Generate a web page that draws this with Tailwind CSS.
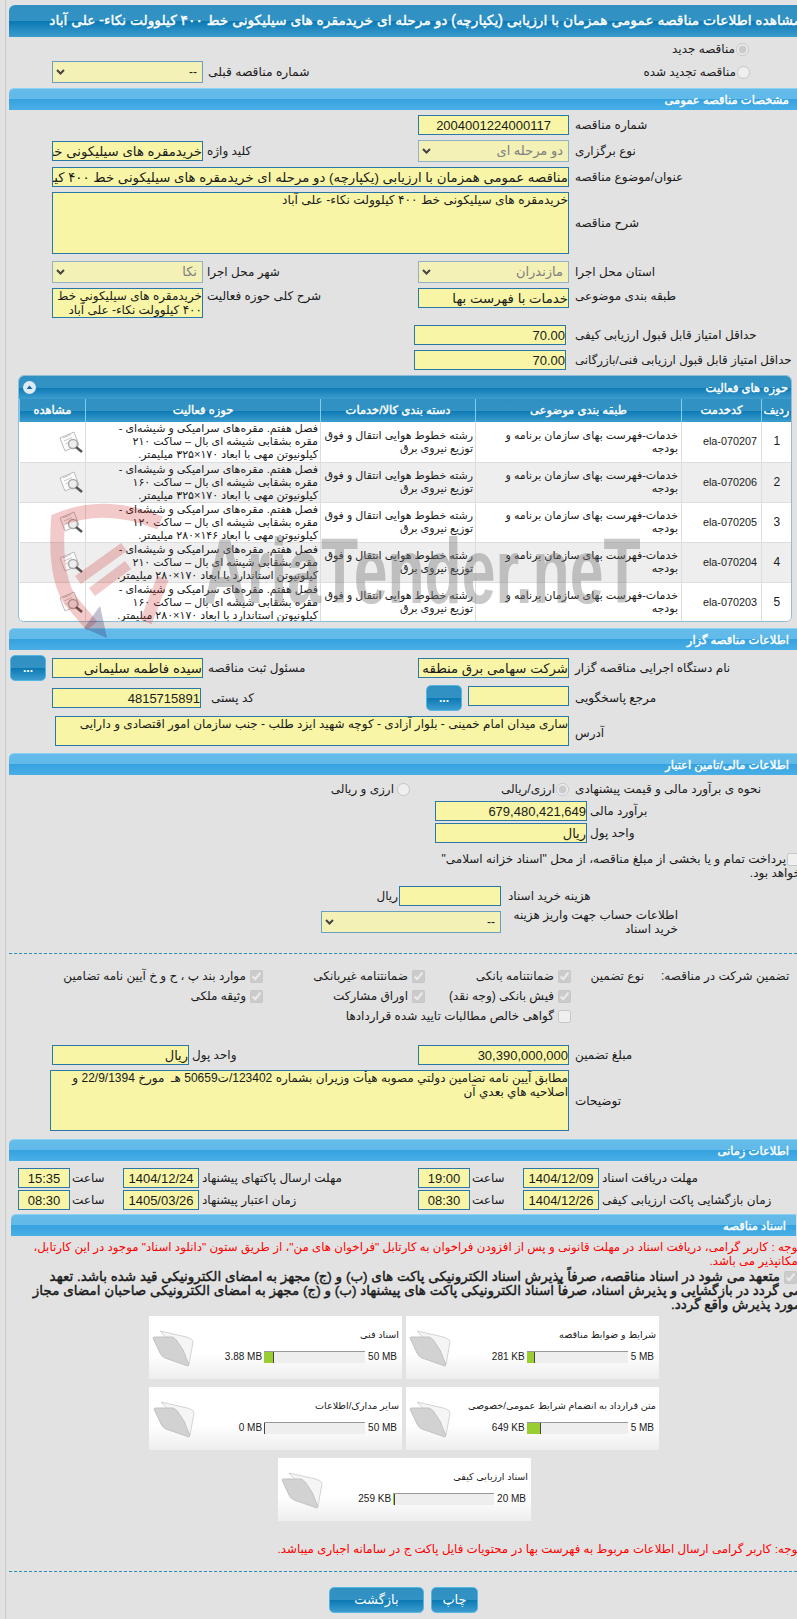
<!doctype html>
<html lang="fa">
<head>
<meta charset="utf-8">
<script src="https://cdn.jsdelivr.net/npm/@tailwindcss/browser@4"></script>
</head>
<body>
<div class="relative w-[797px] h-[1619px] overflow-hidden bg-[#e2e2e2] text-[12px] leading-[14px] whitespace-nowrap text-[#1a1a1a] [font-family:'Liberation_Sans','DejaVu_Sans',sans-serif]">
<div class="ml-[5px] w-[792px] h-[1619px] border-l border-[#cdcdcd] pl-[3px] pt-[5px]">

<div class="h-[32px] w-[788px] rounded-tl-[6px] bg-[linear-gradient(#2f90c1_0,#3192c3_50%,#0a78b3_50%,#3d9dce_100%)] flex justify-end items-center overflow-hidden">
<div dir="rtl" class="whitespace-nowrap text-white text-[13.8px] mr-[-4px] [-webkit-text-stroke:0.4px_#fff]">مشاهده اطلاعات مناقصه عمومی همزمان با ارزیابی (یکپارچه) دو مرحله ای خریدمقره های سیلیکونی خط ۴۰۰ کیلوولت نکاء- علی آباد</div>
</div>

<div class="h-[20px] mt-[2px] flex items-center"><div class="w-[575px]"></div><div class="w-[151px] flex justify-end items-center"><span dir="rtl">مناقصه جدید</span></div><input type="radio" checked disabled class="ml-[1px] w-[13px] h-[13px]"></div>
<div class="h-[22px] mt-[2px] flex items-center pl-[43px]">
<div class="relative w-[151px] h-[22px]"><select dir="rtl" class="appearance-none w-full h-full border border-[#6b9fc0] bg-[#f3f1b5] text-[12px] pr-[5px]"><option>--</option></select><svg class="absolute left-[4px] top-[8px]" width="9" height="6" viewBox="0 0 9 6"><path d="M1 1l3.5 3.5L8 1" stroke="#444" stroke-width="2" fill="none"/></svg></div>
<span dir="rtl" class="ml-[5px] text-[12.3px]">شماره مناقصه قبلی</span>
<div class="ml-auto flex items-center mr-[47px]"><span dir="rtl">مناقصه تجدید شده</span><input type="radio" disabled class="ml-[1px] w-[13px] h-[13px]"></div>
</div>

<div class="mt-[5px] h-[22px] w-[788px] rounded-tl-[5px] border-t border-[#8ad2f2] bg-[linear-gradient(#65bcea_0,#60b9e9_50%,#36a2e0_50%,#4aafe6_100%)] flex justify-end items-center pr-[8px]"><span dir="rtl" class="text-white text-[11.5px] [-webkit-text-stroke:0.4px_#fff]">مشخصات مناقصه عمومی</span></div>

<div class="mt-[5px] h-[20px] flex items-center pl-[409px]">
<input readonly value="2004001224000117" class="w-[151px] h-[20px] border border-[#2a78a8] bg-[#f8f6a6] text-center text-[13px]">
<span dir="rtl" class="ml-[6px]">شماره مناقصه</span>
</div>
<div class="mt-[5px] h-[22px] flex items-center pl-[43px]">
<input readonly dir="rtl" value="خریدمقره های سیلیکونی خط ۴۰۰ کیلوولت نکاء- علی آباد" class="w-[151px] h-[20px] border border-[#2a78a8] bg-[#f8f6a6] text-[13.3px]">
<span dir="rtl" class="ml-[4px] w-[211px] text-left">کلید واژه</span>
<div class="relative w-[151px] h-[22px]"><select dir="rtl" class="appearance-none w-full h-full border border-[#8fb2c6] bg-[#f3f1b5] text-[13px] text-[#808080] pr-[5px]"><option>دو مرحله ای</option></select><svg class="absolute left-[4px] top-[8px]" width="9" height="6" viewBox="0 0 9 6"><path d="M1 1l3.5 3.5L8 1" stroke="#444" stroke-width="2" fill="none"/></svg></div>
<span dir="rtl" class="ml-[6px]">نوع برگزاری</span>
</div>
<div class="mt-[5px] h-[20px] flex items-center pl-[43px]">
<input readonly dir="rtl" value="مناقصه عمومی همزمان با ارزیابی (یکپارچه) دو مرحله ای خریدمقره های سیلیکونی خط ۴۰۰ کیلوولت نکاء- علی آباد" class="w-[517px] h-[20px] border border-[#2a78a8] bg-[#f8f6a6] text-[13.3px]">
<span dir="rtl" class="ml-[6px]">عنوان/موضوع مناقصه</span>
</div>
<div class="mt-[5px] h-[62px] flex items-center pl-[43px]">
<textarea readonly dir="rtl" class="w-[517px] h-[62px] border border-[#2a78a8] bg-[#f8f6a6] text-[12.2px] leading-[14px] resize-none overflow-hidden">خریدمقره های سیلیکونی خط ۴۰۰ کیلوولت نکاء- علی آباد</textarea>
<span dir="rtl" class="ml-[6px]">شرح مناقصه</span>
</div>
<div class="mt-[7px] h-[22px] flex items-center pl-[43px]">
<div class="relative w-[151px] h-[22px]"><select dir="rtl" class="appearance-none w-full h-full border border-[#8fb2c6] bg-[#f3f1b5] text-[13px] text-[#808080] pr-[5px]"><option>نکا</option></select><svg class="absolute left-[4px] top-[8px]" width="9" height="6" viewBox="0 0 9 6"><path d="M1 1l3.5 3.5L8 1" stroke="#444" stroke-width="2" fill="none"/></svg></div>
<span dir="rtl" class="ml-[4px] w-[211px] text-left">شهر محل اجرا</span>
<div class="relative w-[151px] h-[22px]"><select dir="rtl" class="appearance-none w-full h-full border border-[#8fb2c6] bg-[#f3f1b5] text-[13px] text-[#808080] pr-[5px]"><option>مازندران</option></select><svg class="absolute left-[4px] top-[8px]" width="9" height="6" viewBox="0 0 9 6"><path d="M1 1l3.5 3.5L8 1" stroke="#444" stroke-width="2" fill="none"/></svg></div>
<span dir="rtl" class="ml-[6px]">استان محل اجرا</span>
</div>
<div class="mt-[5px] h-[30px] flex items-start pl-[43px]">
<textarea readonly dir="rtl" class="w-[151px] h-[30px] border border-[#2a78a8] bg-[#f8f6a6] text-[12px] leading-[14px] resize-none overflow-hidden">خریدمقره های سیلیکوني خط ۴۰۰ کیلوولت نکاء- علی آباد</textarea>
<span dir="rtl" class="ml-[4px] w-[211px] mt-[1px] text-left">شرح کلی حوزه فعالیت</span>
<input readonly dir="rtl" value="خدمات با فهرست بها" class="w-[151px] h-[20px] border border-[#2a78a8] bg-[#f8f6a6] text-[13.3px]">
<span dir="rtl" class="ml-[6px] mt-[1px]">طبقه بندی موضوعی</span>
</div>
<div class="mt-[7px] h-[20px] flex items-center pl-[405px]">
<input readonly dir="rtl" value="70.00" class="w-[152px] h-[20px] border border-[#2a78a8] bg-[#f8f6a6] text-[13px]">
<span dir="rtl" class="ml-[9px]">حداقل امتیاز قابل قبول ارزیابی کیفی</span>
</div>
<div class="mt-[5px] h-[20px] flex items-center pl-[405px]">
<input readonly dir="rtl" value="70.00" class="w-[152px] h-[20px] border border-[#2a78a8] bg-[#f8f6a6] text-[13px]">
<span dir="rtl" class="ml-[9px] text-[11.8px]">حداقل امتیاز قابل قبول ارزیابی فنی/بازرگانی</span>
</div>

<div class="mt-[5px] ml-[9px] w-[774px] h-[247px] rounded-[6px] border border-[#8fbcd6] overflow-hidden bg-white">
<div class="h-[23px] bg-[linear-gradient(#2f90c1_0,#3192c3_50%,#0a78b3_50%,#3d9dce_100%)] flex items-center justify-between pl-[4px] pr-[3px]">
<svg width="13" height="13" viewBox="0 0 13 13"><circle cx="6.5" cy="6.5" r="6.5" fill="#dfeaf2"/><path d="M3.5 8 6.5 4.5 9.5 8z" fill="#0d6ea8"/></svg>
<span dir="rtl" class="text-white text-[11.5px] [-webkit-text-stroke:0.4px_#fff]">حوزه های فعالیت</span>
</div>
<table dir="rtl" class="table-fixed w-[772px] border-collapse text-[11px] leading-[13px]">
<colgroup><col class="w-[30px]"><col class="w-[80px]"><col class="w-[206px]"><col class="w-[155px]"><col class="w-[235px]"><col class="w-[66px]"></colgroup>
<thead><tr class="h-[23px] text-white text-[11.5px] bg-[linear-gradient(#2f90c1_0,#3192c3_50%,#0a78b3_50%,#3d9dce_100%)] [-webkit-text-stroke:0.4px_#fff]">
<th class="border-x border-[#7fcdf0] font-normal">ردیف</th><th class="border-x border-[#7fcdf0] font-normal">کدخدمت</th><th class="border-x border-[#7fcdf0] font-normal">طبقه بندی موضوعی</th><th class="border-x border-[#7fcdf0] font-normal">دسته بندی کالا/خدمات</th><th class="border-x border-[#7fcdf0] font-normal">حوزه فعالیت</th><th class="border-x border-[#7fcdf0] font-normal">مشاهده</th>
</tr></thead>
<tbody>
<tr class="h-[40px] bg-white border-b border-[#ddd]">
<td class="border-l border-[#ddd] text-center text-[12px]">1</td><td class="border-l border-[#ddd] pr-[4px] text-right text-[10.8px]">ela-070207</td>
<td class="border-l border-[#ddd] pr-[3px]">خدمات-فهرست بهای سازمان برنامه و<br>بودجه</td>
<td class="border-l border-[#ddd] pr-[2px]">رشته خطوط هوایی انتقال و فوق<br>توزیع نیروی برق</td>
<td class="border-l border-[#ddd] pr-[2px]">فصل هفتم. مقره‌های سرامیکی و شیشه‌ای -<br>مقره بشقابی شیشه ای بال – ساکت ۲۱۰<br>کیلونیوتن مهی با ابعاد ۱۷۰×۳۲۵ میلیمتر.</td>
<td><svg class="mr-[2px]" width="24" height="22" viewBox="0 0 24 22"><path d="M1 7 15 1l5 13-14 6z" fill="#fdfdfd" stroke="#bbb"/><path d="M4 7l8-3.500M5 10l8-3.500M6.500 13l5-2" stroke="#c8c8c8"/><circle cx="14" cy="13" r="4.500" fill="#eee" stroke="#aaa" stroke-width="1.500"/><path d="m17 16 6 5" stroke="#555" stroke-width="2.500"/></svg></td>
</tr>
<tr class="h-[40px] bg-[#eeeeee] border-b border-[#ddd]">
<td class="border-l border-[#ddd] text-center text-[12px]">2</td><td class="border-l border-[#ddd] pr-[4px] text-right text-[10.8px]">ela-070206</td>
<td class="border-l border-[#ddd] pr-[3px]">خدمات-فهرست بهای سازمان برنامه و<br>بودجه</td>
<td class="border-l border-[#ddd] pr-[2px]">رشته خطوط هوایی انتقال و فوق<br>توزیع نیروی برق</td>
<td class="border-l border-[#ddd] pr-[2px]">فصل هفتم. مقره‌های سرامیکی و شیشه‌ای -<br>مقره بشقابی شیشه ای بال – ساکت ۱۶۰<br>کیلونیوتن مهی با ابعاد ۱۷۰×۳۲۵ میلیمتر.</td>
<td><svg class="mr-[2px]" width="24" height="22" viewBox="0 0 24 22"><path d="M1 7 15 1l5 13-14 6z" fill="#fdfdfd" stroke="#bbb"/><path d="M4 7l8-3.500M5 10l8-3.500M6.500 13l5-2" stroke="#c8c8c8"/><circle cx="14" cy="13" r="4.500" fill="#eee" stroke="#aaa" stroke-width="1.500"/><path d="m17 16 6 5" stroke="#555" stroke-width="2.500"/></svg></td>
</tr>
<tr class="h-[40px] bg-white border-b border-[#ddd]">
<td class="border-l border-[#ddd] text-center text-[12px]">3</td><td class="border-l border-[#ddd] pr-[4px] text-right text-[10.8px]">ela-070205</td>
<td class="border-l border-[#ddd] pr-[3px]">خدمات-فهرست بهای سازمان برنامه و<br>بودجه</td>
<td class="border-l border-[#ddd] pr-[2px]">رشته خطوط هوایی انتقال و فوق<br>توزیع نیروی برق</td>
<td class="border-l border-[#ddd] pr-[2px]">فصل هفتم. مقره‌های سرامیکی و شیشه‌ای -<br>مقره بشقابی شیشه ای بال – ساکت ۱۲۰<br>کیلونیوتن مهی با ابعاد ۱۴۶×۲۸۰ میلیمتر.</td>
<td><svg class="mr-[2px]" width="24" height="22" viewBox="0 0 24 22"><path d="M1 7 15 1l5 13-14 6z" fill="#fdfdfd" stroke="#bbb"/><path d="M4 7l8-3.500M5 10l8-3.500M6.500 13l5-2" stroke="#c8c8c8"/><circle cx="14" cy="13" r="4.500" fill="#eee" stroke="#aaa" stroke-width="1.500"/><path d="m17 16 6 5" stroke="#555" stroke-width="2.500"/></svg></td>
</tr>
<tr class="h-[40px] bg-[#eeeeee] border-b border-[#ddd]">
<td class="border-l border-[#ddd] text-center text-[12px]">4</td><td class="border-l border-[#ddd] pr-[4px] text-right text-[10.8px]">ela-070204</td>
<td class="border-l border-[#ddd] pr-[3px]">خدمات-فهرست بهای سازمان برنامه و<br>بودجه</td>
<td class="border-l border-[#ddd] pr-[2px]">رشته خطوط هوایی انتقال و فوق<br>توزیع نیروی برق</td>
<td class="border-l border-[#ddd] pr-[2px]">فصل هفتم. مقره‌های سرامیکی و شیشه‌ای -<br>مقره بشقابی شیشه ای بال – ساکت ۲۱۰<br>کیلونیوتن استاندارد با ابعاد ۱۷۰×۲۸۰ میلیمتر.</td>
<td><svg class="mr-[2px]" width="24" height="22" viewBox="0 0 24 22"><path d="M1 7 15 1l5 13-14 6z" fill="#fdfdfd" stroke="#bbb"/><path d="M4 7l8-3.500M5 10l8-3.500M6.500 13l5-2" stroke="#c8c8c8"/><circle cx="14" cy="13" r="4.500" fill="#eee" stroke="#aaa" stroke-width="1.500"/><path d="m17 16 6 5" stroke="#555" stroke-width="2.500"/></svg></td>
</tr>
<tr class="h-[40px] bg-white">
<td class="border-l border-[#ddd] text-center text-[12px]">5</td><td class="border-l border-[#ddd] pr-[4px] text-right text-[10.8px]">ela-070203</td>
<td class="border-l border-[#ddd] pr-[3px]">خدمات-فهرست بهای سازمان برنامه و<br>بودجه</td>
<td class="border-l border-[#ddd] pr-[2px]">رشته خطوط هوایی انتقال و فوق<br>توزیع نیروی برق</td>
<td class="border-l border-[#ddd] pr-[2px]">فصل هفتم. مقره‌های سرامیکی و شیشه‌ای -<br>مقره بشقابی شیشه ای بال – ساکت ۱۶۰<br>کیلونیوتن استاندارد با ابعاد ۱۷۰×۲۸۰ میلیمتر.</td>
<td><svg class="mr-[2px]" width="24" height="22" viewBox="0 0 24 22"><path d="M1 7 15 1l5 13-14 6z" fill="#fdfdfd" stroke="#bbb"/><path d="M4 7l8-3.500M5 10l8-3.500M6.500 13l5-2" stroke="#c8c8c8"/><circle cx="14" cy="13" r="4.500" fill="#eee" stroke="#aaa" stroke-width="1.500"/><path d="m17 16 6 5" stroke="#555" stroke-width="2.500"/></svg></td>
</tr>
</tbody>
</table>
</div>

<div class="mt-[6px] h-[22px] w-[788px] rounded-tl-[5px] border-t border-[#8ad2f2] bg-[linear-gradient(#65bcea_0,#60b9e9_50%,#36a2e0_50%,#4aafe6_100%)] flex justify-end items-center pr-[8px]"><span dir="rtl" class="text-white text-[11.5px] [-webkit-text-stroke:0.4px_#fff]">اطلاعات مناقصه گزار</span></div>

<div class="mt-[5px] h-[26px] flex items-center pl-[1px]">
<button class="w-[36px] h-[26px] rounded-[5px] border border-[#56b6e2] bg-[linear-gradient(#2f90c1_0,#3192c3_50%,#0a78b3_50%,#3d9dce_100%)] text-white text-[12px] font-bold">...</button>
<input readonly dir="rtl" value="سیده فاطمه سلیمانی" class="ml-[6px] w-[151px] h-[20px] border border-[#2a78a8] bg-[#f8f6a6] text-[13.3px]">
<span dir="rtl" class="ml-[5px] w-[210px] text-left">مسئول ثبت مناقصه</span>
<input readonly dir="rtl" value="شرکت سهامی برق منطقه ای مازندران" class="w-[151px] h-[20px] border border-[#2a78a8] bg-[#f8f6a6] text-[13.3px]">
<span dir="rtl" class="ml-[6px]">نام دستگاه اجرایی مناقصه گزار</span>
</div>
<div class="mt-[4px] h-[26px] flex items-center pl-[43px]">
<input readonly dir="rtl" value="4815715891" class="w-[149px] h-[20px] border border-[#2a78a8] bg-[#f8f6a6] text-[13px]">
<span dir="rtl" class="ml-[10px] w-[215px] text-left">کد پستی</span>
<button class="w-[36px] h-[26px] rounded-[5px] border border-[#56b6e2] bg-[linear-gradient(#2f90c1_0,#3192c3_50%,#0a78b3_50%,#3d9dce_100%)] text-white text-[12px] font-bold">...</button>
<input readonly class="ml-[6px] w-[101px] h-[20px] border border-[#2a78a8] bg-[#f8f6a6] self-start mt-[1px]">
<span dir="rtl" class="ml-[6px]">مرجع پاسخگویی</span>
</div>
<div class="mt-[5px] h-[30px] flex items-center pl-[46px]">
<textarea readonly dir="rtl" class="w-[514px] h-[30px] border border-[#2a78a8] bg-[#f8f6a6] text-[12px] leading-[14px] resize-none overflow-hidden">ساری میدان امام خمینی - بلوار آزادی - کوچه شهید ایزد طلب - جنب سازمان امور اقتصادی و دارایی</textarea>
<span dir="rtl" class="ml-[6px] mt-[4px]">آدرس</span>
</div>

<div class="mt-[7px] h-[22px] w-[788px] rounded-tl-[5px] border-t border-[#8ad2f2] bg-[linear-gradient(#65bcea_0,#60b9e9_50%,#36a2e0_50%,#4aafe6_100%)] flex justify-end items-center pr-[8px]"><span dir="rtl" class="text-white text-[11.5px] [-webkit-text-stroke:0.4px_#fff]">اطلاعات مالی/تامین اعتبار</span></div>

<div class="mt-[4px] h-[20px] flex items-center">
<span dir="rtl" class="ml-[324px] w-[61px] text-left">ارزی و ریالی</span><input type="radio" disabled class="ml-[3px] w-[13px] h-[13px]">
<span dir="rtl" class="ml-[92px] w-[53px] text-left">ارزی/ریالی</span><input type="radio" checked disabled class="ml-[1px] w-[13px] h-[13px]">
<span dir="rtl" class="ml-[6px]">نحوه ی برآورد مالی و قیمت پیشنهادی</span>
</div>
<div class="mt-[2px] h-[20px] flex items-center pl-[426px]">
<input readonly dir="rtl" value="679,480,421,649" class="w-[152px] h-[20px] border border-[#2a78a8] bg-[#f8f6a6] text-[13px]">
<span dir="rtl" class="ml-[3px]">برآورد مالی</span>
</div>
<div class="mt-[2px] h-[20px] flex items-center pl-[426px]">
<input readonly dir="rtl" value="ریال" class="w-[152px] h-[20px] border border-[#2a78a8] bg-[#f8f6a6] text-[13px]">
<span dir="rtl" class="ml-[3px]">واحد پول</span>
</div>
<p dir="rtl" class="mt-[9px] ml-[420px] w-[372px] h-[28px] whitespace-normal"><input type="checkbox" disabled class="w-[13px] h-[13px] align-middle mx-[1px]">پرداخت تمام و یا بخشی از مبلغ مناقصه، از محل "اسناد خزانه اسلامی" خواهد بود.</p>
<div class="mt-[6px] h-[20px] flex items-center pl-[372px]">
<span dir="rtl" class="w-[17px] text-left">ریال</span>
<input readonly class="ml-[1px] w-[102px] h-[20px] border border-[#2a78a8] bg-[#f8f6a6]">
<span dir="rtl" class="ml-[7px]">هزینه خرید اسناد</span>
</div>
<div class="mt-[5px] h-[22px] flex items-center pl-[312px]">
<div class="relative w-[180px] h-[22px]"><select dir="rtl" class="appearance-none w-full h-full border border-[#6b9fc0] bg-[#f3f1b5] text-[12px] pr-[5px]"><option>--</option></select><svg class="absolute left-[4px] top-[8px]" width="9" height="6" viewBox="0 0 9 6"><path d="M1 1l3.5 3.5L8 1" stroke="#444" stroke-width="2" fill="none"/></svg></div>
<span dir="rtl" class="ml-[7px] w-[170px] whitespace-normal">اطلاعات حساب جهت واریز هزینه خرید اسناد</span>
</div>

<div class="mt-[20px] w-[788px] border-t border-dashed border-[#2a8fc0]"></div>

<div class="mt-[12px] h-[20px] flex items-center">
<div class="w-[254px] flex justify-end items-center"><span dir="rtl">موارد بند پ ، ح و خ آیین نامه تضامین</span><input type="checkbox" checked disabled class="ml-[4px] w-[13px] h-[13px]"></div>
<div class="w-[162px] flex justify-end items-center"><span dir="rtl">ضمانتنامه غیربانکی</span><input type="checkbox" checked disabled class="ml-[4px] w-[13px] h-[13px]"></div>
<div class="w-[146px] flex justify-end items-center"><span dir="rtl">ضمانتنامه بانکی</span><input type="checkbox" checked disabled class="ml-[4px] w-[13px] h-[13px]"></div>
<span dir="rtl" class="ml-[21px] w-[52px] text-left">نوع تضمین</span>
<span dir="rtl" class="ml-[17px]">تضمین شرکت در مناقصه:</span>
</div>
<div class="h-[20px] flex items-center">
<div class="w-[254px] flex justify-end items-center"><span dir="rtl">وثیقه ملکی</span><input type="checkbox" checked disabled class="ml-[4px] w-[13px] h-[13px]"></div>
<div class="w-[162px] flex justify-end items-center"><span dir="rtl">اوراق مشارکت</span><input type="checkbox" checked disabled class="ml-[4px] w-[13px] h-[13px]"></div>
<div class="w-[146px] flex justify-end items-center"><span dir="rtl">فیش بانکی (وجه نقد)</span><input type="checkbox" checked disabled class="ml-[4px] w-[13px] h-[13px]"></div>
</div>
<div class="h-[20px] flex items-center">
<div class="w-[562px] flex justify-end items-center"><span dir="rtl">گواهی خالص مطالبات تایید شده قراردادها</span><input type="checkbox" disabled class="ml-[4px] w-[13px] h-[13px]"></div>
</div>

<div class="mt-[19px] h-[20px] flex items-center pl-[43px]">
<input readonly dir="rtl" value="ریال" class="w-[137px] h-[20px] border border-[#2a78a8] bg-[#f8f6a6] text-[13px]">
<span dir="rtl" class="ml-[3px] w-[226px] text-left">واحد پول</span>
<input readonly dir="rtl" value="30,390,000,000" class="w-[151px] h-[20px] border border-[#2a78a8] bg-[#f8f6a6] text-[13px]">
<span dir="rtl" class="ml-[6px]">مبلغ تضمین</span>
</div>
<div class="mt-[5px] h-[61px] flex items-center pl-[41px]">
<textarea readonly dir="rtl" class="w-[519px] h-[61px] border border-[#2a78a8] bg-[#f8f6a6] text-[12px] leading-[14px] resize-none overflow-hidden">مطابق آیین نامه تضامین دولتي مصوبه هیأت وزیران بشماره 123402/ت50659 هـ  مورخ 22/9/1394 و اصلاحیه هاي بعدي آن</textarea>
<span dir="rtl" class="ml-[6px]">توضیحات</span>
</div>

<div class="mt-[8px] h-[22px] w-[788px] rounded-tl-[5px] border-t border-[#8ad2f2] bg-[linear-gradient(#65bcea_0,#60b9e9_50%,#36a2e0_50%,#4aafe6_100%)] flex justify-end items-center pr-[8px]"><span dir="rtl" class="text-white text-[11.5px] [-webkit-text-stroke:0.4px_#fff]">اطلاعات زمانی</span></div>

<div class="mt-[7px] h-[20px] flex items-center pl-[9px]">
<input readonly value="15:35" class="w-[52px] h-[20px] border border-[#2a78a8] bg-[#f8f6a6] text-center text-[13px]">
<span dir="rtl" class="ml-[2px] w-[51px] text-left">ساعت</span>
<input readonly value="1404/12/24" class="w-[76px] h-[20px] border border-[#2a78a8] bg-[#f8f6a6] text-center text-[13px]">
<span dir="rtl" class="ml-[3px] w-[216px] text-left">مهلت ارسال پاکتهای پیشنهاد</span>
<input readonly value="19:00" class="w-[52px] h-[20px] border border-[#2a78a8] bg-[#f8f6a6] text-center text-[13px]">
<span dir="rtl" class="ml-[2px] w-[51px] text-left">ساعت</span>
<input readonly value="1404/12/09" class="w-[76px] h-[20px] border border-[#2a78a8] bg-[#f8f6a6] text-center text-[13px]">
<span dir="rtl" class="ml-[3px]">مهلت دریافت اسناد</span>
</div>
<div class="mt-[2px] h-[20px] flex items-center pl-[9px]">
<input readonly value="08:30" class="w-[52px] h-[20px] border border-[#2a78a8] bg-[#f8f6a6] text-center text-[13px]">
<span dir="rtl" class="ml-[2px] w-[51px] text-left">ساعت</span>
<input readonly value="1405/03/26" class="w-[76px] h-[20px] border border-[#2a78a8] bg-[#f8f6a6] text-center text-[13px]">
<span dir="rtl" class="ml-[3px] w-[216px] text-left">زمان اعتبار پیشنهاد</span>
<input readonly value="08:30" class="w-[52px] h-[20px] border border-[#2a78a8] bg-[#f8f6a6] text-center text-[13px]">
<span dir="rtl" class="ml-[2px] w-[51px] text-left">ساعت</span>
<input readonly value="1404/12/26" class="w-[76px] h-[20px] border border-[#2a78a8] bg-[#f8f6a6] text-center text-[13px]">
<span dir="rtl" class="ml-[3px]">زمان بازگشایی پاکت ارزیابی کیفی</span>
</div>

<div class="mt-[4px] ml-[2px] h-[22px] w-[785px] rounded-tl-[5px] border-t border-[#8ad2f2] bg-[linear-gradient(#65bcea_0,#60b9e9_50%,#36a2e0_50%,#4aafe6_100%)] flex justify-end items-center pr-[10px]"><span dir="rtl" class="text-white text-[11.5px] [-webkit-text-stroke:0.4px_#fff]">اسناد مناقصه</span></div>

<p dir="rtl" class="mt-[4px] w-[792px] h-[28px] text-[#f00] text-[11.8px] whitespace-normal">توجه : کاربر گرامی، دریافت اسناد در مهلت قانونی و پس از افزودن فراخوان به کارتابل "فراخوان های من"، از طریق ستون "دانلود اسناد" موجود در این کارتابل، امکانپذیر می باشد.</p>
<p dir="rtl" class="mt-[2px] w-[792px] h-[42px] text-[13.5px] leading-[14px] [-webkit-text-stroke:0.4px_#1a1a1a]"><input type="checkbox" checked disabled class="w-[13px] h-[13px] align-middle ml-[4px] mr-[4px]">متعهد می شود در اسناد مناقصه، صرفاً پذیرش اسناد الکترونیکی پاکت های (ب) و (ج) مجهز به امضای الکترونیکی قید شده باشد. تعهد<br>می گردد در بازگشایی و پذیرش اسناد، صرفاً اسناد الکترونیکی پاکت های پیشنهاد (ب) و (ج) مجهز به امضای الکترونیکی صاحبان امضای مجاز<br>مورد پذیرش واقع گردد.</p>

<div class="mt-[4px] ml-[140px] flex gap-[4px]">
<div class="w-[253px] h-[63px] bg-[linear-gradient(#fff_60%,#eeeeee_100%)] px-[3px] pt-[12px] relative">
<div dir="rtl" class="text-[9.6px]">اسناد فنی</div>
<div class="mt-[9px] flex items-center justify-end h-[12px] text-[10px]"><span class="mr-[2px]">3.88 MB</span><div class="w-[101px] h-[12px] bg-[#eeeeee] border-t border-[#999] flex"><div class="w-[10px] bg-[#9acd32] border-r border-[#444]"></div></div><span class="ml-[3px] mr-[2px]">50 MB</span></div>
<svg class="absolute left-[3px] top-[13px]" width="42" height="38" viewBox="0 0 42 38"><path d="M8 2 30 7q11 2 11 6L37 35 30 25z" fill="#f5f5f5" stroke="#d4d4d4"/><path d="M1 9q0-1 2-1H20q3 1 5 4l6 9 6 15q-1 2-4 0L13 29q-3-1-5-5z" fill="#d2d2d2" stroke="#c2c2c2"/></svg>
</div>
<div class="w-[253px] h-[63px] bg-[linear-gradient(#fff_60%,#eeeeee_100%)] px-[3px] pt-[12px] relative">
<div dir="rtl" class="text-[9.6px]">شرایط و ضوابط مناقصه</div>
<div class="mt-[9px] flex items-center justify-end h-[12px] text-[10px]"><span class="mr-[2px]">281 KB</span><div class="w-[101px] h-[12px] bg-[#eeeeee] border-t border-[#999] flex"><div class="w-[8px] bg-[#9acd32] border-r border-[#444]"></div></div><span class="ml-[3px] mr-[2px]">5 MB</span></div>
<svg class="absolute left-[3px] top-[13px]" width="42" height="38" viewBox="0 0 42 38"><path d="M8 2 30 7q11 2 11 6L37 35 30 25z" fill="#f5f5f5" stroke="#d4d4d4"/><path d="M1 9q0-1 2-1H20q3 1 5 4l6 9 6 15q-1 2-4 0L13 29q-3-1-5-5z" fill="#d2d2d2" stroke="#c2c2c2"/></svg>
</div>
</div>
<div class="mt-[8px] ml-[140px] flex gap-[4px]">
<div class="w-[253px] h-[63px] bg-[linear-gradient(#fff_60%,#eeeeee_100%)] px-[3px] pt-[12px] relative">
<div dir="rtl" class="text-[9.6px]">سایر مدارک/اطلاعات</div>
<div class="mt-[9px] flex items-center justify-end h-[12px] text-[10px]"><span class="mr-[2px]">0 MB</span><div class="w-[101px] h-[12px] bg-[#eeeeee] border-t border-[#999] flex"><div class="w-[1px] bg-[#444]"></div></div><span class="ml-[3px] mr-[2px]">50 MB</span></div>
<svg class="absolute left-[4px] top-[13px]" width="42" height="38" viewBox="0 0 42 38"><path d="M8 2 30 7q11 2 11 6L37 35 30 25z" fill="#f5f5f5" stroke="#d4d4d4"/><path d="M1 9q0-1 2-1H20q3 1 5 4l6 9 6 15q-1 2-4 0L13 29q-3-1-5-5z" fill="#d2d2d2" stroke="#c2c2c2"/></svg>
</div>
<div class="w-[253px] h-[63px] bg-[linear-gradient(#fff_60%,#eeeeee_100%)] px-[3px] pt-[12px] relative">
<div dir="rtl" class="text-[9.6px]">متن قرارداد به انضمام شرایط عمومی/خصوصی</div>
<div class="mt-[9px] flex items-center justify-end h-[12px] text-[10px]"><span class="mr-[2px]">649 KB</span><div class="w-[101px] h-[12px] bg-[#eeeeee] border-t border-[#999] flex"><div class="w-[14px] bg-[#9acd32] border-r border-[#444]"></div></div><span class="ml-[3px] mr-[2px]">5 MB</span></div>
<svg class="absolute left-[3px] top-[13px]" width="42" height="38" viewBox="0 0 42 38"><path d="M8 2 30 7q11 2 11 6L37 35 30 25z" fill="#f5f5f5" stroke="#d4d4d4"/><path d="M1 9q0-1 2-1H20q3 1 5 4l6 9 6 15q-1 2-4 0L13 29q-3-1-5-5z" fill="#d2d2d2" stroke="#c2c2c2"/></svg>
</div>
</div>
<div class="mt-[8px] ml-[269px] flex">
<div class="w-[253px] h-[63px] bg-[linear-gradient(#fff_60%,#eeeeee_100%)] px-[3px] pt-[12px] relative">
<div dir="rtl" class="text-[9.6px]">اسناد ارزیابی کیفی</div>
<div class="mt-[9px] flex items-center justify-end h-[12px] text-[10px]"><span class="mr-[2px]">259 KB</span><div class="w-[101px] h-[12px] bg-[#eeeeee] border-t border-[#999] flex"><div class="w-[2px] bg-[#9acd32] border-r border-[#444]"></div></div><span class="ml-[3px] mr-[2px]">20 MB</span></div>
<svg class="absolute left-[3px] top-[13px]" width="42" height="38" viewBox="0 0 42 38"><path d="M8 2 30 7q11 2 11 6L37 35 30 25z" fill="#f5f5f5" stroke="#d4d4d4"/><path d="M1 9q0-1 2-1H20q3 1 5 4l6 9 6 15q-1 2-4 0L13 29q-3-1-5-5z" fill="#d2d2d2" stroke="#c2c2c2"/></svg>
</div>
</div>

<p dir="rtl" class="mt-[21px] w-[792px] h-[14px] text-[#f00] text-[11.8px]">توجه: کاربر گرامی ارسال اطلاعات مربوط به فهرست بها در محتویات فایل پاکت ج در سامانه اجباری میباشد.</p>
<div class="mt-[15px] w-[788px] border-t border-dashed border-[#2a8fc0]"></div>
<div class="mt-[15px] ml-[320px] flex gap-[7px]">
<button class="w-[95px] h-[26px] rounded-[5px] border border-[#56b6e2] bg-[linear-gradient(#2f90c1_0,#3192c3_50%,#0a78b3_50%,#3d9dce_100%)] text-white text-[13px]">بازگشت</button>
<button class="w-[47px] h-[26px] rounded-[5px] border border-[#56b6e2] bg-[linear-gradient(#2f90c1_0,#3192c3_50%,#0a78b3_50%,#3d9dce_100%)] text-white text-[13px]">چاپ</button>
</div>

</div>

<svg class="absolute left-0 top-0 pointer-events-none" width="797" height="1619" viewBox="0 0 797 1619"><g fill="none" stroke="#c22" stroke-opacity=".24"><path d="M160 523Q105 500 58 520 54 575 70 600L92 626" stroke-width="14"/><path d="M78 580 124 547M92 592 128 565" stroke-width="10"/><path d="M163 578 146 622" stroke-width="12"/></g><path d="M84 628 107 638 100 606z" fill="#336" fill-opacity=".3"/></svg>
<div class="absolute left-[203px] top-[525px] text-[92px] leading-[92px] font-bold text-[#777] opacity-40 pointer-events-none origin-left scale-x-[.66]">AriaTender.neT</div>
</div>
</body>
</html>
